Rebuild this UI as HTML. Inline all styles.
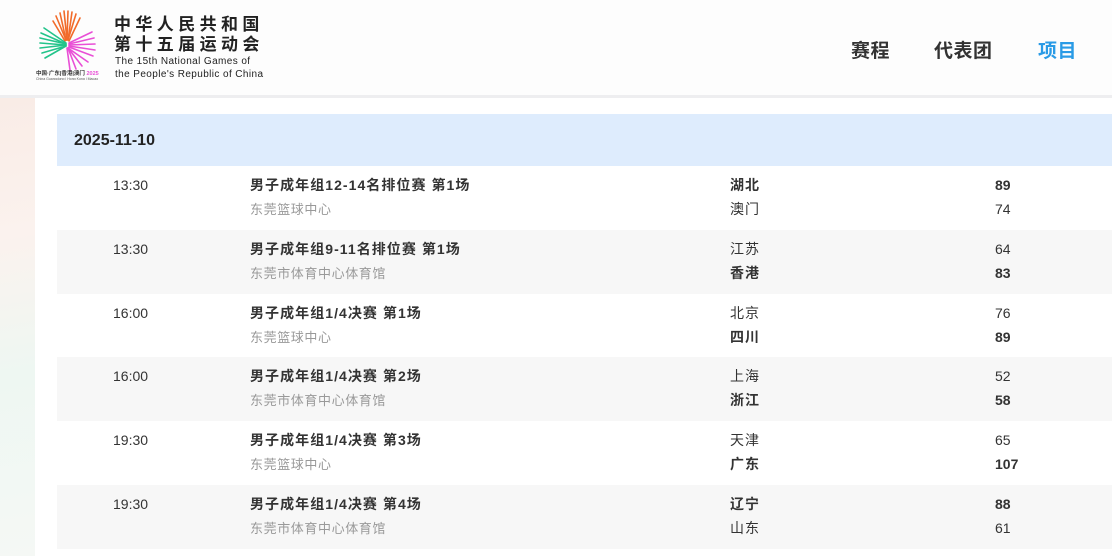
<!DOCTYPE html>
<html><head><meta charset="utf-8"><style>
*{margin:0;padding:0;box-sizing:border-box}
body{width:1112px;height:556px;overflow:hidden;position:relative;background:#fff;font-family:"Liberation Sans","Noto Sans CJK SC",sans-serif;color:#333}
.bgl{position:absolute;left:0;top:98px;width:35px;height:458px;background:linear-gradient(170deg,#f9ece6 0%,#fbf2ee 30%,#eef7f2 60%,#f5f8f5 100%)}
.panel{position:absolute;left:35px;top:98px;width:1077px;height:458px;background:#fff}
.hdr{position:absolute;left:0;top:0;width:1112px;height:98px;background:#fdfdfd;border-bottom:3px solid #eeeef0}
.date{position:absolute;left:57px;top:114px;width:1055px;height:52px;background:#deecfd;font-weight:bold;font-size:16px;line-height:54px;padding-left:17px;color:#222}
.row{position:absolute;left:57px;width:1055px;height:64px;font-size:14px}
.row.g{background:#f7f7f7}
.row div{position:absolute;white-space:nowrap}
.t{left:56px;top:11px}
.n{left:193px;top:9px;font-weight:bold;letter-spacing:1.05px}
.v{left:193px;top:33px;font-size:13px;color:#999;letter-spacing:0.6px}
.a{left:673px;top:9px;letter-spacing:1px}.b{left:673px;top:33px;letter-spacing:1px}
.s1{left:938px;top:11px}.s2{left:938px;top:35px}
.w{font-weight:bold}
.nav{position:absolute;top:36px;font-size:19px;font-weight:bold;color:#333;letter-spacing:0.5px}
</style></head><body>
<div class="bgl"></div>
<div class="panel"></div>
<div class="hdr">
<svg style="position:absolute;left:36px;top:8px" width="66" height="72" viewBox="36 8 66 72">
<g stroke-width="1.6" stroke-linecap="round">
<g stroke="#f26b2a"><line x1="66" y1="40" x2="56" y2="16"/><line x1="66" y1="40" x2="60" y2="13"/><line x1="67" y1="40" x2="64" y2="11"/><line x1="67" y1="40" x2="68" y2="11"/><line x1="68" y1="40" x2="72" y2="12"/><line x1="68" y1="40" x2="76" y2="14"/><line x1="69" y1="41" x2="80" y2="18"/><line x1="65" y1="41" x2="53" y2="21"/></g>
<g stroke="#22c48a"><line x1="66" y1="44" x2="41" y2="33"/><line x1="66" y1="44" x2="40" y2="38"/><line x1="66" y1="45" x2="40" y2="43"/><line x1="66" y1="45" x2="40" y2="48"/><line x1="66" y1="46" x2="42" y2="53"/><line x1="66" y1="46" x2="45" y2="58"/><line x1="66" y1="43" x2="44" y2="28"/></g>
<g stroke="#e94fd6"><line x1="69" y1="44" x2="94" y2="38"/><line x1="69" y1="45" x2="95" y2="44"/><line x1="69" y1="46" x2="95" y2="50"/><line x1="69" y1="47" x2="93" y2="56"/><line x1="68" y1="48" x2="88" y2="62"/><line x1="68" y1="48" x2="82" y2="66"/><line x1="68" y1="48" x2="76" y2="69"/><line x1="67" y1="48" x2="70" y2="70"/><line x1="69" y1="43" x2="92" y2="32"/></g>
</g>
<text x="36" y="75" font-size="5.5" font-weight="bold" fill="#333" font-family="Liberation Sans,Noto Sans CJK SC,sans-serif">中国·广东|香港|澳门 <tspan fill="#e94fd6">2025</tspan></text>
<text x="36" y="80" font-size="3.5" fill="#555" font-family="Liberation Sans,sans-serif">China Guangdong | Hong Kong | Macao</text>
</svg>
<div style="position:absolute;left:114px;top:15px;font-size:17px;font-weight:bold;letter-spacing:4.4px;line-height:20px;color:#222">中华人民共和国<br>第十五届运动会</div>
<div style="position:absolute;left:115px;top:55px;font-size:10px;line-height:13px;letter-spacing:0.4px;color:#222">The 15th National Games of<br>the People's Republic of China</div>
<div class="nav" style="left:851px">赛程</div>
<div class="nav" style="left:934px">代表团</div>
<div class="nav" style="left:1038px;color:#2a9be6">项目</div>
</div>
<div class="date">2025-11-10</div>
<div class="row" style="top:166px"><div class="t">13:30</div><div class="n">男子成年组12-14名排位赛 第1场</div><div class="v">东莞篮球中心</div><div class="a w">湖北</div><div class="b">澳门</div><div class="s1 w">89</div><div class="s2">74</div></div>
<div class="row g" style="top:230px"><div class="t">13:30</div><div class="n">男子成年组9-11名排位赛 第1场</div><div class="v">东莞市体育中心体育馆</div><div class="a">江苏</div><div class="b w">香港</div><div class="s1">64</div><div class="s2 w">83</div></div>
<div class="row" style="top:294px"><div class="t">16:00</div><div class="n">男子成年组1/4决赛 第1场</div><div class="v">东莞篮球中心</div><div class="a">北京</div><div class="b w">四川</div><div class="s1">76</div><div class="s2 w">89</div></div>
<div class="row g" style="top:357px"><div class="t">16:00</div><div class="n">男子成年组1/4决赛 第2场</div><div class="v">东莞市体育中心体育馆</div><div class="a">上海</div><div class="b w">浙江</div><div class="s1">52</div><div class="s2 w">58</div></div>
<div class="row" style="top:421px"><div class="t">19:30</div><div class="n">男子成年组1/4决赛 第3场</div><div class="v">东莞篮球中心</div><div class="a">天津</div><div class="b w">广东</div><div class="s1">65</div><div class="s2 w">107</div></div>
<div class="row g" style="top:485px"><div class="t">19:30</div><div class="n">男子成年组1/4决赛 第4场</div><div class="v">东莞市体育中心体育馆</div><div class="a w">辽宁</div><div class="b">山东</div><div class="s1 w">88</div><div class="s2">61</div></div>
</body></html>
